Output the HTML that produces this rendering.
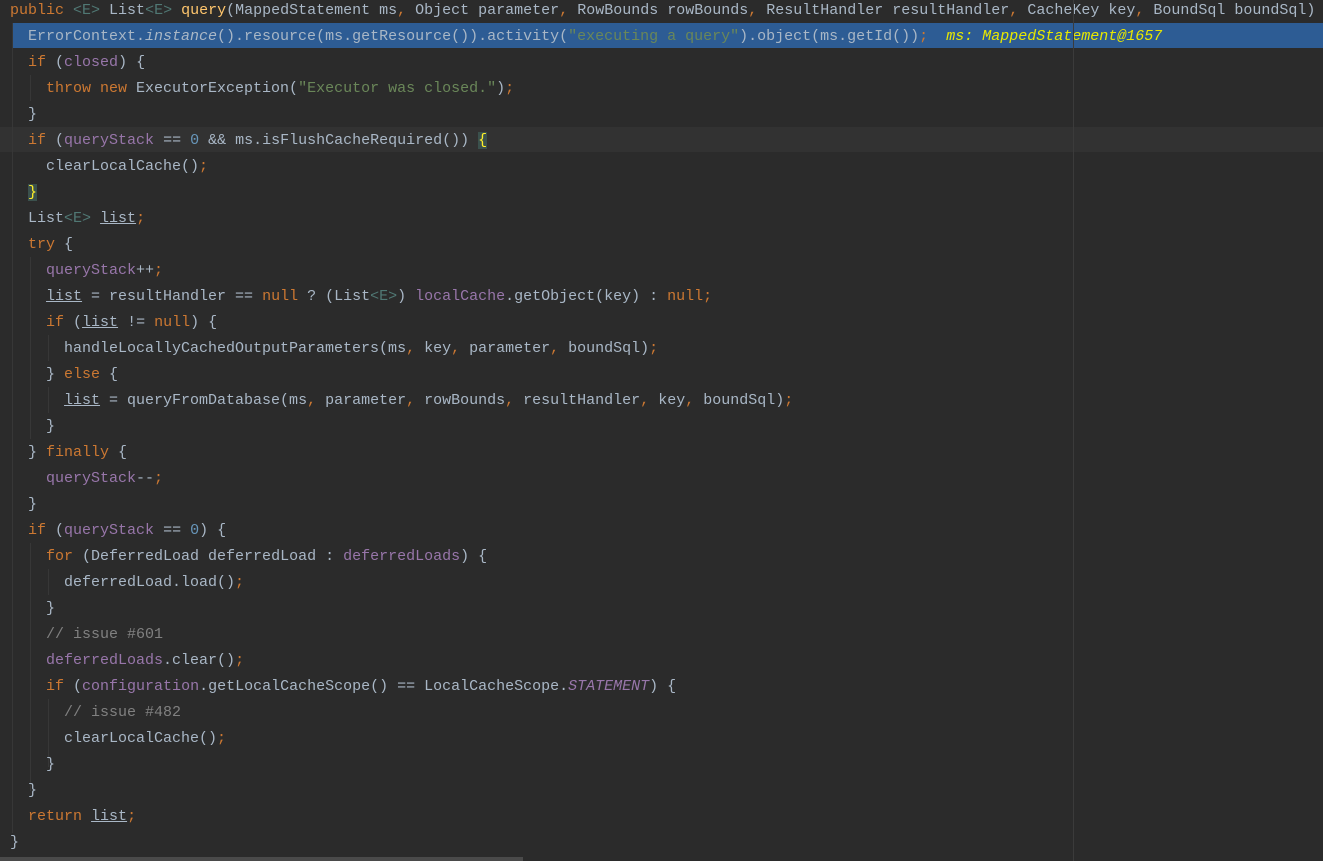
<!DOCTYPE html>
<html><head><meta charset="utf-8"><style>
html,body{margin:0;padding:0;background:#2b2b2b;width:1323px;height:861px;overflow:hidden}
#c{position:absolute;left:10px;top:-2px;margin:0;font-family:"Liberation Mono",monospace;font-size:15px;line-height:26px;color:#a9b7c6;white-space:pre;z-index:2}
.k{color:#cc7832}.s{color:#6a8759}.f{color:#9876aa}.n{color:#6897bb}.c{color:#808080}.m{color:#ffc66d}.g{color:#507874}
.i{font-style:italic}.u{text-decoration:underline}
.dbg{color:#e8e800;font-style:italic}
.hl{position:absolute;left:13px;right:0;top:23px;height:25px;background:#2d5c94;z-index:1}
.cur{position:absolute;left:0;right:0;top:127px;height:25px;background:#323232;z-index:0}
.mg{position:absolute;left:1073px;top:0;width:1px;height:861px;background:#3b3b3b;z-index:3}
.gd{position:absolute;width:1px;background:#373737;z-index:1}
.sb{position:absolute;left:0;top:857px;width:523px;height:4px;background:#4a4a4a}
.br{background:#3b514d;color:#ffef28}
</style></head><body>
<div class="cur"></div><div class="hl"></div><div class="mg"></div>
<div class="gd" style="left:12px;top:23px;height:810px"></div>
<div class="gd" style="left:30px;top:75px;height:26px"></div>
<div class="gd" style="left:30px;top:257px;height:182px"></div>
<div class="gd" style="left:48px;top:335px;height:26px"></div>
<div class="gd" style="left:48px;top:387px;height:26px"></div>
<div class="gd" style="left:30px;top:543px;height:248px"></div>
<div class="gd" style="left:48px;top:569px;height:26px"></div>
<div class="gd" style="left:48px;top:699px;height:68px"></div>
<div class="sb"></div>
<pre id="c"><span class="k">public</span> <span class="g">&lt;E&gt;</span> List<span class="g">&lt;E&gt;</span> <span class="m">query</span>(MappedStatement ms<span class="k">,</span> Object parameter<span class="k">,</span> RowBounds rowBounds<span class="k">,</span> ResultHandler resultHandler<span class="k">,</span> CacheKey key<span class="k">,</span> BoundSql boundSql)
  ErrorContext.<span class="i">instance</span>().resource(ms.getResource()).activity(<span class="s">"executing a query"</span>).object(ms.getId())<span class="k">;</span>  <span class="dbg">ms: MappedStatement@1657</span>
  <span class="k">if</span> (<span class="f">closed</span>) {
    <span class="k">throw new</span> ExecutorException(<span class="s">"Executor was closed."</span>)<span class="k">;</span>
  }
  <span class="k">if</span> (<span class="f">queryStack</span> == <span class="n">0</span> &amp;&amp; ms.isFlushCacheRequired()) <span class="br">{</span>
    clearLocalCache()<span class="k">;</span>
  <span class="br">}</span>
  List<span class="g">&lt;E&gt;</span> <span class="u">list</span><span class="k">;</span>
  <span class="k">try</span> {
    <span class="f">queryStack</span>++<span class="k">;</span>
    <span class="u">list</span> = resultHandler == <span class="k">null</span> ? (List<span class="g">&lt;E&gt;</span>) <span class="f">localCache</span>.getObject(key) : <span class="k">null;</span>
    <span class="k">if</span> (<span class="u">list</span> != <span class="k">null</span>) {
      handleLocallyCachedOutputParameters(ms<span class="k">,</span> key<span class="k">,</span> parameter<span class="k">,</span> boundSql)<span class="k">;</span>
    } <span class="k">else</span> {
      <span class="u">list</span> = queryFromDatabase(ms<span class="k">,</span> parameter<span class="k">,</span> rowBounds<span class="k">,</span> resultHandler<span class="k">,</span> key<span class="k">,</span> boundSql)<span class="k">;</span>
    }
  } <span class="k">finally</span> {
    <span class="f">queryStack</span>--<span class="k">;</span>
  }
  <span class="k">if</span> (<span class="f">queryStack</span> == <span class="n">0</span>) {
    <span class="k">for</span> (DeferredLoad deferredLoad : <span class="f">deferredLoads</span>) {
      deferredLoad.load()<span class="k">;</span>
    }
    <span class="c">// issue #601</span>
    <span class="f">deferredLoads</span>.clear()<span class="k">;</span>
    <span class="k">if</span> (<span class="f">configuration</span>.getLocalCacheScope() == LocalCacheScope.<span class="f i">STATEMENT</span>) {
      <span class="c">// issue #482</span>
      clearLocalCache()<span class="k">;</span>
    }
  }
  <span class="k">return</span> <span class="u">list</span><span class="k">;</span>
}</pre>
</body></html>
